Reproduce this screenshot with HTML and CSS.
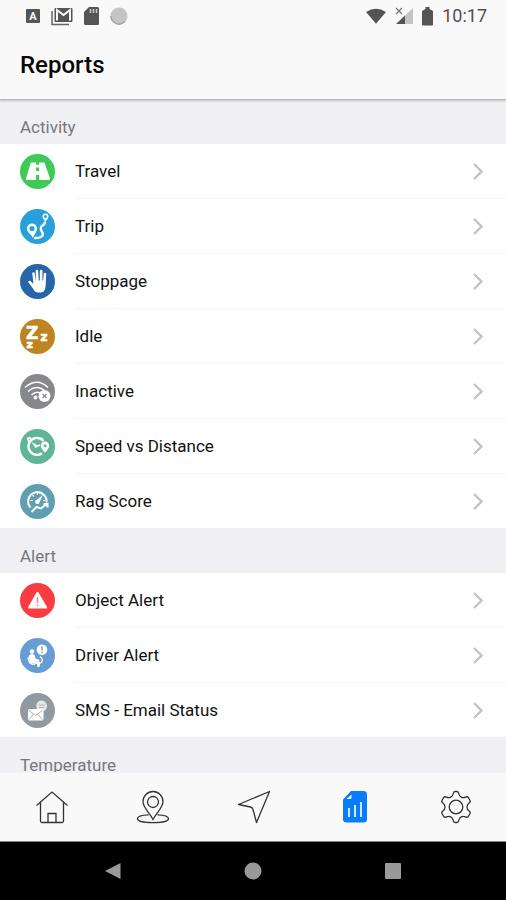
FILE: index.html
```html
<!DOCTYPE html>
<html lang="en">
<head>
<meta charset="utf-8">
<meta name="viewport" content="width=device-width, initial-scale=1">
<title>Reports</title>
<link rel="stylesheet" href="styles.css">
</head>
<body>
<header class="top">
  <div class="status">
    <div class="status-left">
      <svg width="14" height="14" viewBox="0 0 14 14"><rect width="14" height="14" rx="1" fill="#555"/><text class="glyph" x="7" y="11" text-anchor="middle" font-size="11" fill="#fafafa">A</text></svg>
      <svg class="mail" width="22" height="19" viewBox="0 0 22 19"><path d="M1 4v13.500h17" fill="none" stroke="#666" stroke-width="1.500"/><rect x="3.500" y="1" width="18" height="14" rx="1" fill="#555"/><path d="M6 13.500V3l6.500 5L19 3v10.500" fill="none" stroke="#fafafa" stroke-width="2"/></svg>
      <svg class="card" width="15" height="18" viewBox="0 0 15 18"><path d="M5 0h8.500q1.500 0 1.500 1.500v15q0 1.500-1.500 1.500h-12Q0 18 0 16.500V5z" fill="#555"/><path d="M6.500 2v4M9.500 2v4M12.500 2v4" stroke="#ccc" stroke-width="1.500"/></svg>
      <svg class="disc" width="18" height="18" viewBox="0 0 18 18"><circle cx="9" cy="9" r="8.500" fill="#c4c4c4"/><path d="M1 9a8 8 0 0 0 14 5.300" fill="none" stroke="#a4a4a4" stroke-width="1.500"/></svg>
    </div>
    <div class="status-right">
      <svg width="20" height="17" viewBox="0 0 22 18"><path d="M0 4Q11-3 22 4L11 17z" fill="#555"/></svg>
      <svg class="signal" width="18" height="18" viewBox="0 0 18 18"><path d="M18 1v16H1z" fill="#c4c4c4"/><path d="M10 8.500V17H1z" fill="#555"/><path d="m1 1 6 6m0-6L1 7" stroke="#777" stroke-width="1.300"/></svg>
      <svg class="battery" width="11" height="19" viewBox="0 0 11 19"><path d="M3.500 0h4v2L11 4v13.500q0 1-1 1H1q-1 0-1-1V4l3.500-2z" fill="#555"/></svg>
      <time>10:17</time>
    </div>
  </div>
  <h1>Reports</h1>
</header>
<main class="content">
  <section>
    <h2>Activity</h2>
    <ul class="list">
      <li><a class="row" href="#travel">
        <svg class="icon" viewBox="0 0 35 35"><circle cx="17.500" cy="17.500" r="17.500" fill="#3fc956"/><path d="M11.500 8.500h12q1 0 1.300 1L30 24.500q.5 1.500-1 1.500H7q-1.500 0-1-1.500l4.500-15q.3-1 1-1z" fill="#fff"/><path d="M17.600 7.500v3.300m0 2.700v3.500m0 4v5" stroke="#3fc956" stroke-width="3"/></svg>
        <span class="label">Travel</span><svg class="chevron" viewBox="0 0 10 17"><path d="m1 1 7.500 7.500L1 16"/></svg></a></li>
      <li><a class="row" href="#trip">
        <svg class="icon" viewBox="0 0 35 35"><circle cx="17.500" cy="17.500" r="17.500" fill="#28a1da"/><path d="M14 29c6 .5 11-2 7.800-6.500-2-3-.8-5 .8-6 1.500-.8 2.200-2 2.400-3.500" fill="none" stroke="#fff" stroke-width="2.400"/><path d="M12 14.500a5 5 0 0 0-5 5c0 4 4.500 6 6 9.500 1-3.500 4-6 4-9.500a5 5 0 0 0-5-5z" fill="#fff"/><circle cx="12" cy="19.500" r="2.600" fill="#28a1da"/><path d="M25.500 4.500a3 3 0 0 0-3 3c0 2 2.200 3.500 2.500 6 1-2 3.500-4 3.500-6a3 3 0 0 0-3-3z" fill="#fff"/><circle cx="25.500" cy="7.500" r="1.500" fill="#28a1da"/></svg>
        <span class="label">Trip</span><svg class="chevron" viewBox="0 0 10 17"><path d="m1 1 7.500 7.500L1 16"/></svg></a></li>
      <li><a class="row" href="#stoppage">
        <svg class="icon" viewBox="0 0 35 35"><circle cx="17.500" cy="17.500" r="17.500" fill="#2764a8"/><path d="M13.500 9.500 15 20m2-13 .5 13m3.700-13L21 20m4-10-.8 10" stroke="#fff" stroke-width="2.600" stroke-linecap="round"/><path d="M13.500 16.500h12.200l-.2 6c0 3-2 6-4.500 6h-3c-2.500 0-3.700-1.500-5-4L8.500 18.500c-.8-1.800 1.200-2.500 2.200-1.200l2.800 3z" fill="#fff"/></svg>
        <span class="label">Stoppage</span><svg class="chevron" viewBox="0 0 10 17"><path d="m1 1 7.500 7.500L1 16"/></svg></a></li>
      <li><a class="row" href="#idle">
        <svg class="icon" viewBox="0 0 35 35"><circle cx="17.500" cy="17.500" r="17.500" fill="#bd8421"/><text class="zed" fill="#fff" stroke="#fff" stroke-width=".6"><tspan x="6" y="19.500" font-size="17">Z</tspan><tspan x="20.500" y="21.500" font-size="12">z</tspan><tspan x="6.500" y="28.500" font-size="11">z</tspan></text></svg>
        <span class="label">Idle</span><svg class="chevron" viewBox="0 0 10 17"><path d="m1 1 7.500 7.500L1 16"/></svg></a></li>
      <li><a class="row" href="#inactive">
        <svg class="icon" viewBox="0 0 35 35"><circle cx="17.500" cy="17.500" r="17.500" fill="#87888c"/><g fill="none" stroke="#fff" stroke-width="1.600"><path d="M5 13.500q12-10.500 23 0M8 17.500q9-8 17.500 0M11.500 21q5.500-5 10-1"/></g><circle cx="15.500" cy="23.500" r="2" fill="#fff"/><circle cx="24.500" cy="22" r="6" fill="#fff"/><path d="m22.500 20 4 4m0-4-4 4" stroke="#87888c" stroke-width="1.300"/></svg>
        <span class="label">Inactive</span><svg class="chevron" viewBox="0 0 10 17"><path d="m1 1 7.500 7.500L1 16"/></svg></a></li>
      <li><a class="row" href="#speed">
        <svg class="icon" viewBox="0 0 35 35"><circle cx="17.500" cy="17.500" r="17.500" fill="#61b597"/><path d="M23.500 12A8.500 8.500 0 1 0 22 24.200" fill="none" stroke="#fff" stroke-width="2.400"/><path d="M7 9.500 11 9m10 0 2 1M9 13l-1.500-4" stroke="#fff" stroke-width="1.800"/><path d="m11.500 13 6.500 3.500-2.500 2.500z" fill="#fff"/><path d="M15.500 18 20 16" stroke="#fff" stroke-width="1.500"/><path d="M25 12.500a4.200 4.200 0 0 0-4.200 4.200c0 3 4.200 6.800 4.200 6.800s4.200-3.800 4.200-6.800a4.200 4.200 0 0 0-4.200-4.200z" fill="#fff"/><circle cx="25" cy="16.700" r="1.500" fill="#61b597"/></svg>
        <span class="label">Speed vs Distance</span><svg class="chevron" viewBox="0 0 10 17"><path d="m1 1 7.500 7.500L1 16"/></svg></a></li>
      <li><a class="row" href="#rag">
        <svg class="icon" viewBox="0 0 35 35"><circle cx="17.500" cy="17.500" r="17.500" fill="#609fb1"/><path d="M10.500 23.500a9.200 9.200 0 1 1 16-5" fill="none" stroke="#fff" stroke-width="2"/><path d="M10.500 16.500h2.500m-.5-5.500 1.500 1.500m3.500-3.500v2M23 16.500h2" stroke="#fff" stroke-width="1.200"/><path d="m23 10.500-3.500 7.800a2.200 2.200 0 1 1-2.500-2.500z" fill="#fff"/><path d="m11.500 28 5-5 4.500 1.500 5.500-4.500m-3 0h4v3.500" fill="none" stroke="#fff" stroke-width="2"/></svg>
        <span class="label">Rag Score</span><svg class="chevron" viewBox="0 0 10 17"><path d="m1 1 7.500 7.500L1 16"/></svg></a></li>
    </ul>
  </section>
  <section>
    <h2>Alert</h2>
    <ul class="list">
      <li><a class="row" href="#object">
        <svg class="icon" viewBox="0 0 35 35"><circle cx="17.500" cy="17.500" r="17.500" fill="#f93c3f"/><path d="M16.500 9.500q1-1.500 2 0l8.500 14.500q.8 1.500-.8 1.500H9q-1.600 0-.8-1.500z" fill="#fff"/><path d="M17.500 14v6m0 1.500v2" stroke="#f98688" stroke-width="1.500"/></svg>
        <span class="label">Object Alert</span><svg class="chevron" viewBox="0 0 10 17"><path d="m1 1 7.500 7.500L1 16"/></svg></a></li>
      <li><a class="row" href="#driver">
        <svg class="icon" viewBox="0 0 35 35"><circle cx="17.500" cy="17.500" r="17.500" fill="#689dd3"/><circle cx="22" cy="11.800" r="5.300" fill="#fff"/><path d="M22 8.500v4m0 1.200v1.500" stroke="#689dd3" stroke-width="1.500"/><circle cx="12" cy="13.500" r="2.300" fill="#fff"/><path d="M9.500 17q2.500-2 5 0l1 3.500 4 1.500-.5 1.500-4.500-.5 6 1-1 5h-2l-.5-3-7-1-1.500-6z" fill="#fff"/><path d="M8 19.500c.5 6 3 7 7 7m5-8c3 2 3 5 .5 7" fill="none" stroke="#fff" stroke-width="1.300"/></svg>
        <span class="label">Driver Alert</span><svg class="chevron" viewBox="0 0 10 17"><path d="m1 1 7.500 7.500L1 16"/></svg></a></li>
      <li><a class="row" href="#sms">
        <svg class="icon" viewBox="0 0 35 35"><circle cx="17.500" cy="17.500" r="17.500" fill="#919a9f"/><path d="M22 7.500a5.500 5.500 0 1 1-1 11l-3.500 2 .5-3.500a5.500 5.500 0 0 1 4-9.500z" fill="#e3e6e7"/><path d="M19 12h6m-6 2.500h5" stroke="#b5bbbe"/><rect x="8" y="16" width="15.500" height="11.500" rx="1.500" fill="#fff"/><path d="m9 17.500 6.700 5 6.700-5M9 26.500l4.500-5m9 5-4.500-5" fill="none" stroke="#a8b0b4"/></svg>
        <span class="label">SMS - Email Status</span><svg class="chevron" viewBox="0 0 10 17"><path d="m1 1 7.500 7.500L1 16"/></svg></a></li>
    </ul>
  </section>
  <section>
    <h2>Temperature</h2>
  </section>
</main>
<nav class="tabs" aria-label="Main">
  <a href="#home" aria-label="Home"><svg viewBox="0 0 34 34"><path d="M1.500 15.500 17 2l15.500 13.500M5.500 12.500V31q0 1.500 1.500 1.500h20q1.500 0 1.500-1.500V12.500M13 32v-8.500h8V32"/></svg></a>
  <a href="#map" aria-label="Map"><svg viewBox="0 0 34 34"><path d="M17 29.500C13 22 7 17.500 7 11.500a10 10 0 0 1 20 0c0 6-6 10.500-10 18z"/><circle cx="17" cy="12" r="5.500"/><path d="M12.500 24.800C6 25 1.500 26.500 1.500 28.700c0 2.400 6.500 4 15.500 4s15.500-1.600 15.500-4c0-2.200-4.500-3.700-11-3.900"/></svg></a>
  <a href="#navigate" aria-label="Navigate"><svg viewBox="0 0 34 34"><path d="M32.500 1.500 1.500 14.500l12 2.500q2 .5 2.500 2.500l3.500 13z" stroke-linejoin="round"/></svg></a>
  <a href="#reports" aria-label="Reports" aria-current="page"><svg class="report" viewBox="0 0 34 34"><path d="M13 1h12.500Q29 1 29 4.500v24.500q0 3.500-3.500 3.500h-17Q5 32.500 5 29V9.500z" fill="#087bff" stroke="none"/><path d="M13.500 4.500v3q0 1.500-1.500 1.500H8.500z" fill="#fafafa" stroke="none"/><path d="M11 18v9m6-12v12m6-15v15" stroke="#d5e8ff" stroke-width="2"/></svg></a>
  <a href="#settings" aria-label="Settings"><svg viewBox="0 0 34 34"><path d="M14.200 3.500q.3-2 2-2h1.600q1.700 0 2 2c.3 2.500 1.200 3 2.400 3.600 1.300.7 2.300.9 4.200 0q2-1 3 .6l1.500 2.600q.9 1.600-.8 2.700c-2 1.300-2.100 2.500-2.100 4s.1 2.700 2.100 4q1.700 1.100.8 2.700l-1.500 2.600q-1 1.600-3 .6c-1.900-.9-2.900-.7-4.200 0-1.200.6-2.100 1.100-2.400 3.600q-.3 2-2 2h-1.600q-1.700 0-2-2c-.3-2.500-1.200-3-2.400-3.600-1.300-.7-2.300-.9-4.200 0q-2 1-3-.6l-1.500-2.600q-.9-1.600.8-2.700c2-1.300 2.100-2.500 2.100-4s-.1-2.700-2.100-4q-1.700-1.100-.8-2.700l1.500-2.600q1-1.600 3-.6c1.900.9 2.900.7 4.200 0 1.200-.6 2.100-1.100 2.400-3.600z"/><circle cx="17" cy="17" r="6.800"/></svg></a>
</nav>
<div class="system">
  <button aria-label="Back"><svg viewBox="0 0 18 18"><path d="M1 9 16.500 1v16z"/></svg></button>
  <button aria-label="Home screen"><svg viewBox="0 0 18 18"><circle cx="9" cy="9" r="8.500"/></svg></button>
  <button aria-label="Recent apps"><svg viewBox="0 0 18 18"><rect x="1" y="1" width="16" height="16" rx="1"/></svg></button>
</div>
</body>
</html>
```

FILE: styles.css
```css
* { box-sizing: border-box; }

body {
  margin: 0;
  height: 100vh;
  display: flex;
  flex-direction: column;
  font-family: Roboto, "Liberation Sans", sans-serif;
  background: #efeff4;
  color: #111;
}

svg { display: block; flex: none; }

.top {
  position: relative;
  background: #f9f9f9;
  border-bottom: 1px solid #b6b7bb;
  box-shadow: 0 1px 2px rgba(0, 0, 0, .2);
}

.status {
  display: flex;
  justify-content: space-between;
  align-items: center;
  height: 32px;
  padding: 0 19px 0 26px;
}

.status-left, .status-right {
  display: flex;
  align-items: center;
}

.status-left { gap: 11px; }
.status-right { gap: 9px; }

.glyph { font-family: Roboto, sans-serif; font-weight: 700; }
.zed { font-family: "DejaVu Sans", sans-serif; font-weight: 700; }

time {
  font-size: 18px;
  font-weight: 400;
  line-height: 32px;
  color: #505050;
}

h1 {
  margin: 0;
  padding: 0 20px;
  font-size: 24px;
  font-weight: 500;
  line-height: 67px;
  color: #080808;
}

.content {
  flex: 1;
  min-height: 0;
  overflow-y: auto;
  scrollbar-width: none;
}

h2 {
  margin: 0;
  padding: 12px 20px 0;
  height: 45px;
  font-size: 17px;
  font-weight: 400;
  line-height: 32px;
  color: #77777b;
}

section:first-child h2 { height: 44px; padding-top: 11px; }

.list {
  margin: 0;
  padding: 0;
  list-style: none;
  background: #fff;
}

.row {
  display: flex;
  align-items: center;
  gap: 20px;
  padding-left: 20px;
  color: inherit;
  text-decoration: none;
}

.icon { width: 35px; height: 35px; }

.label {
  flex: 1;
  font-size: 17px;
  line-height: 54px;
}

.row::after {
  content: "";
  width: 3px;
}

li:not(:last-child) {
  border-bottom: 1px solid;
  border-image: linear-gradient(to right, #fff 75px, #f4f4f6 75px) 1;
}

.chevron {
  width: 10px;
  height: 17px;
  fill: none;
  stroke: #c3c3c5;
  stroke-width: 2.4;
}

.tabs {
  display: flex;
  height: 70px;
  padding-left: 1px;
  background: #f9f9f9;
  border-top: 1px solid #f4f4f6;
  border-bottom: 1px solid #888;
}

.tabs a {
  flex: 1;
  display: flex;
  align-items: center;
  justify-content: center;
}

.tabs svg {
  width: 34px;
  height: 34px;
  fill: none;
  stroke: #333;
  stroke-width: 1.3;
}

.system {
  display: flex;
  justify-content: center;
  gap: 100px;
  height: 58px;
  background: #000;
}

.system button {
  display: flex;
  align-items: center;
  justify-content: center;
  width: 40px;
  padding: 0;
  border: 0;
  background: none;
}

.system svg {
  width: 18px;
  height: 18px;
  fill: #999;
}
```
